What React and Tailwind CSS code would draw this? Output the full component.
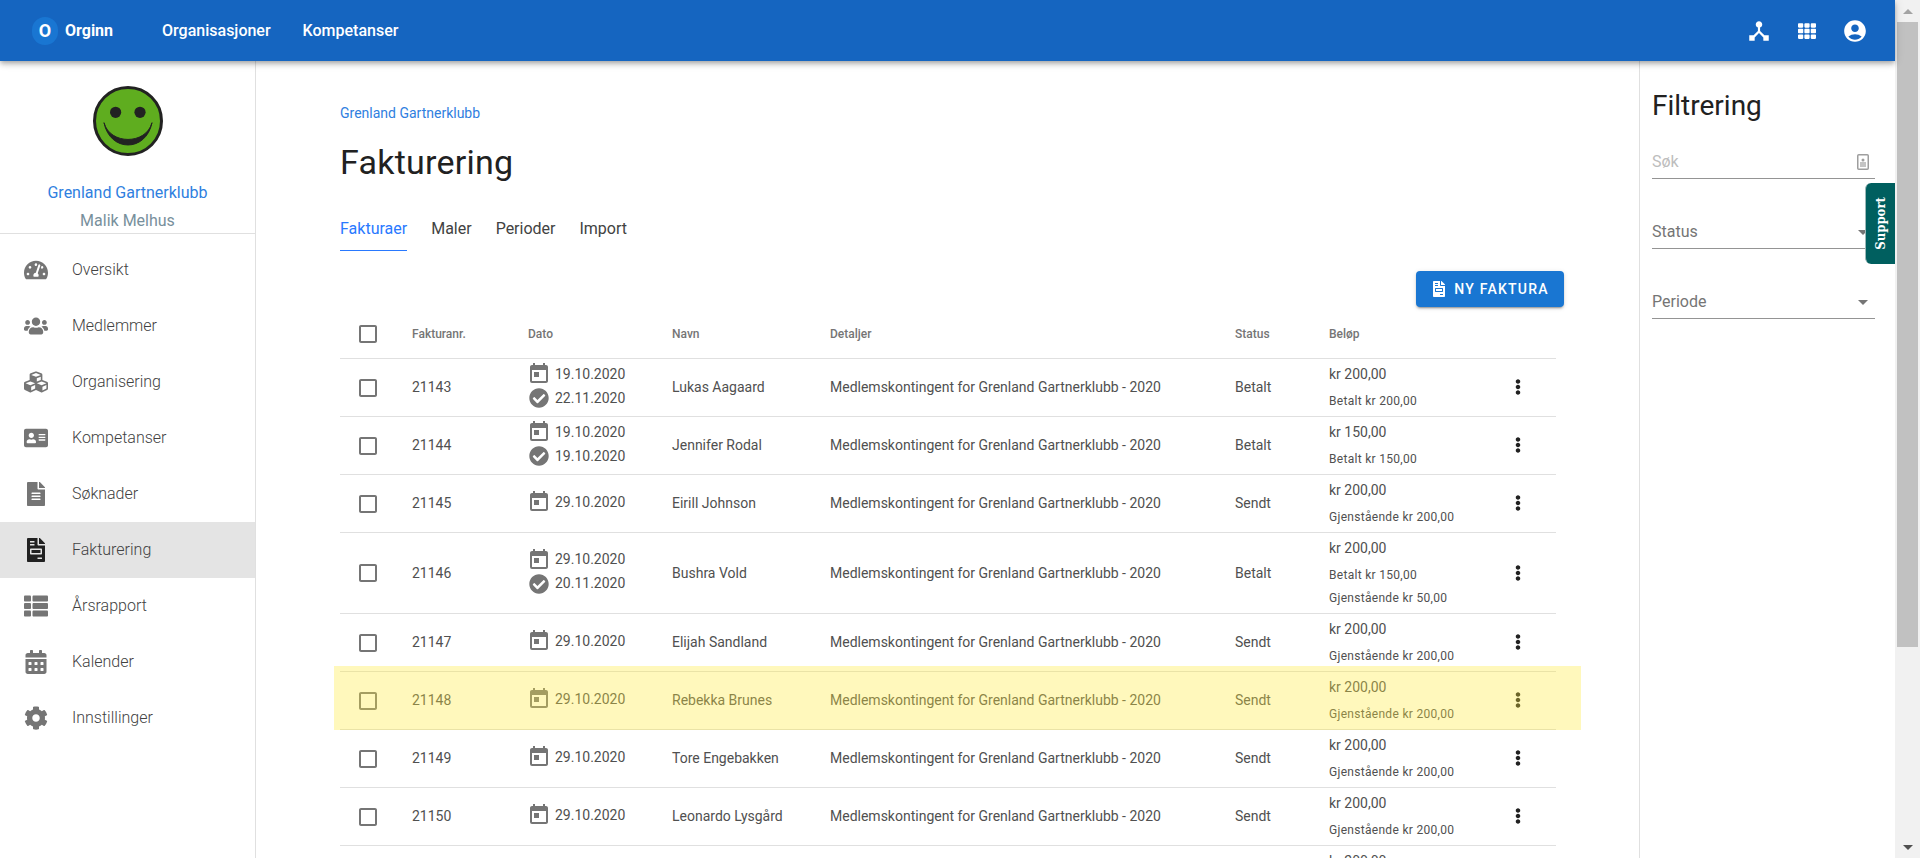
import React from 'react';
import {
  FaTachometerAlt, FaUsers, FaCubes, FaAddressCard, FaFileAlt, FaFileInvoice,
  FaThList, FaCalendarAlt, FaCog, FaCheckCircle, FaTh, FaEllipsisV,
} from 'react-icons/fa';
import {
  MdDeviceHub, MdAccountCircle, MdCheckBoxOutlineBlank, MdToday, MdArrowDropDown,
} from 'react-icons/md';

const NAV_ITEMS = [
  { label: 'Oversikt', icon: FaTachometerAlt },
  { label: 'Medlemmer', icon: FaUsers },
  { label: 'Organisering', icon: FaCubes },
  { label: 'Kompetanser', icon: FaAddressCard },
  { label: 'Søknader', icon: FaFileAlt },
  { label: 'Fakturering', icon: FaFileInvoice, active: true },
  { label: 'Årsrapport', icon: FaThList },
  { label: 'Kalender', icon: FaCalendarAlt },
  { label: 'Innstillinger', icon: FaCog },
];

const DETAILS = 'Medlemskontingent for Grenland Gartnerklubb - 2020';

const INVOICES = [
  { id: '21143', date: '19.10.2020', paidDate: '22.11.2020', name: 'Lukas Aagaard', status: 'Betalt', amount: 'kr 200,00', lines: ['Betalt kr 200,00'] },
  { id: '21144', date: '19.10.2020', paidDate: '19.10.2020', name: 'Jennifer Rodal', status: 'Betalt', amount: 'kr 150,00', lines: ['Betalt kr 150,00'] },
  { id: '21145', date: '29.10.2020', name: 'Eirill Johnson', status: 'Sendt', amount: 'kr 200,00', lines: ['Gjenstående kr 200,00'] },
  { id: '21146', date: '29.10.2020', paidDate: '20.11.2020', name: 'Bushra Vold', status: 'Betalt', amount: 'kr 200,00', lines: ['Betalt kr 150,00', 'Gjenstående kr 50,00'] },
  { id: '21147', date: '29.10.2020', name: 'Elijah Sandland', status: 'Sendt', amount: 'kr 200,00', lines: ['Gjenstående kr 200,00'] },
  { id: '21148', date: '29.10.2020', name: 'Rebekka Brunes', status: 'Sendt', amount: 'kr 200,00', lines: ['Gjenstående kr 200,00'], highlight: true },
  { id: '21149', date: '29.10.2020', name: 'Tore Engebakken', status: 'Sendt', amount: 'kr 200,00', lines: ['Gjenstående kr 200,00'] },
  { id: '21150', date: '29.10.2020', name: 'Leonardo Lysgård', status: 'Sendt', amount: 'kr 200,00', lines: ['Gjenstående kr 200,00'] },
];

const GRID = 'grid grid-cols-[72px_116px_144px_158px_405px_94px_171px_36px_1fr] items-center';

const Smiley = () => (
  <svg width="72" height="72" viewBox="0 0 72 72">
    <circle cx="36" cy="36" r="33.5" fill="#5fad1f" stroke="#222222" strokeWidth="3" />
    <circle cx="23.6" cy="27.3" r="5.6" fill="#222222" />
    <circle cx="48" cy="27.3" r="5.6" fill="#222222" />
    <path d="M12 37.7 C18 67.4 54 67.4 60 37.7 C54 60 18 60 12 37.7 Z" fill="#222222" stroke="#222222" strokeWidth="1" strokeLinejoin="round" />
  </svg>
);

// little badge shown inside the search field
const BadgeIcon = () => (
  <svg width="12" height="16" viewBox="0 0 12 16" className="mb-[8px] mr-[6px]">
    <rect x="0.75" y="0.75" width="10.5" height="14.5" rx="1" fill="none" stroke="#9e9e9e" strokeWidth="1.5" />
    <circle cx="6" cy="6" r="1.5" fill="#9e9e9e" />
    <rect x="3" y="8" width="6" height="5" fill="#c4c4c4" />
  </svg>
);

const Sidebar = () => (
  <aside className="w-[256px] flex-shrink-0 border-r border-[#e0e0e0]">
    <div className="h-[173px] border-b border-[#e0e0e0] flex flex-col items-center pt-[24px]">
      <Smiley />
      <div className="mt-[24px] text-[16px] leading-[24px] text-[#2f80e0]">Grenland Gartnerklubb</div>
      <div className="mt-[4px] text-[16px] leading-[24px] text-[#78909c]">Malik Melhus</div>
    </div>
    <nav className="pt-[8px]">
      {NAV_ITEMS.map(({ label, icon: Icon, active }) => (
        <div key={label} className={`h-[56px] flex items-center ${active ? 'bg-[#e4e4e4]' : ''}`}>
          <div className={`w-[72px] flex justify-center ${active ? 'text-[#212121]' : 'text-[#757575]'}`}>
            <Icon size={24} />
          </div>
          <span className="text-[16px] text-[#424242] font-light">{label}</span>
        </div>
      ))}
    </nav>
  </aside>
);

const InvoiceRow = ({ invoice }) => (
  <div className={`${GRID} relative border-b border-[#e0e0e0] text-[14px] text-[#505050] ${invoice.lines.length > 1 ? 'h-[81px]' : 'h-[58px]'}`}>
    <div className="pl-[16px] flex"><MdCheckBoxOutlineBlank size={24} className="text-[#757575]" /></div>
    <div>{invoice.id}</div>
    <div className="-ml-[1px] -mt-[3px]">
      <div className="flex items-center gap-[4px] h-[24px]">
        <MdToday size={24} className="text-[#757575] flex-shrink-0" />
        <span>{invoice.date}</span>
      </div>
      {invoice.paidDate && (
        <div className="flex items-center gap-[4px] h-[24px]">
          <div className="w-[24px] flex justify-center flex-shrink-0"><FaCheckCircle size={20} className="text-[#757575]" /></div>
          <span>{invoice.paidDate}</span>
        </div>
      )}
    </div>
    <div>{invoice.name}</div>
    <div>{DETAILS}</div>
    <div>{invoice.status}</div>
    <div className="self-start pt-[7px]">
      <div className="leading-[16px] mb-[8px]">{invoice.amount}</div>
      {invoice.lines.map((line) => (
        <div key={line} className="text-[12px] leading-[23px] tracking-[0.3px]">{line}</div>
      ))}
    </div>
    <div className="flex justify-center text-[#212121] -mt-[1px]"><FaEllipsisV size={16} /></div>
    {/* translucent yellow marker over the whole row */}
    {invoice.highlight && (
      <div className="absolute -left-[6px] -right-[25px] -top-[6px] -bottom-[1px] bg-[rgba(255,235,59,0.34)] pointer-events-none" />
    )}
  </div>
);

const Filter = ({ label, select, className = '' }) => (
  <div className={`h-[44px] border-b border-[#949494] flex items-end justify-between text-[16px] leading-[24px] ${className}`}>
    <span className={`pb-[4px] ${select ? 'text-[#757575]' : 'text-[#bdbdbd]'}`}>{label}</span>
    {select ? <MdArrowDropDown size={24} className="text-[#757575] mb-[4px]" /> : <BadgeIcon />}
  </div>
);

const Scrollbar = () => (
  <div className="w-[25px] flex-shrink-0 bg-[#f1f1f1] flex flex-col items-center">
    <div className="h-[22px] flex items-center justify-center">
      <div className="w-0 h-0 border-x-[5px] border-x-transparent border-b-[5px] border-b-[#a3a3a3]" />
    </div>
    <div className="w-[21px] h-[625px] bg-[#c1c1c1]" />
    <div className="flex-1" />
    <div className="h-[22px] flex items-center justify-center">
      <div className="w-0 h-0 border-x-[5px] border-x-transparent border-t-[5px] border-t-[#505050]" />
    </div>
  </div>
);

const App = () => (
  <div className="flex h-screen overflow-hidden bg-white font-['Roboto',sans-serif]">
    <div className="flex-1 min-w-0 flex flex-col relative">
      {/* Top bar */}
      <header className="h-[61px] flex-shrink-0 bg-[#1565c0] text-white flex items-center pl-[32px] pr-[16px] relative z-10 shadow-[0_2px_4px_-1px_rgba(0,0,0,0.2),0_4px_5px_0_rgba(0,0,0,0.14),0_1px_10px_0_rgba(0,0,0,0.12)]">
        <div className="w-[26px] h-[28px] rounded-full bg-[#1976d2] flex items-center justify-center font-bold text-[18px]">O</div>
        <span className="ml-[7px] text-[16px] font-bold">Orginn</span>
        <span className="ml-[49px] text-[16px] font-medium">Organisasjoner</span>
        <span className="ml-[32px] text-[16px] font-medium">Kompetanser</span>
        <div className="ml-auto flex items-center">
          <div className="w-[48px] flex justify-center"><MdDeviceHub size={26} /></div>
          <div className="w-[48px] flex justify-center"><FaTh size={18} /></div>
          <div className="w-[48px] flex justify-center"><MdAccountCircle size={26} /></div>
        </div>
      </header>

      <div className="flex flex-1 min-h-0">
        <Sidebar />

        {/* Main content */}
        <main className="flex-1 min-w-0 pl-[84px] pr-[83px] pt-[44px]">
          <div className="text-[14px] leading-[16px] text-[#2f80e0]">Grenland Gartnerklubb</div>
          <h1 className="mt-[21px] text-[34px] leading-[40px] tracking-[0.25px] text-[#212121]">Fakturering</h1>
          <div className="mt-[35px] flex gap-[24px] text-[16px] leading-[24px] text-[#424242]">
            <div className="pb-[9px] border-b border-[#2979ff] text-[#2979ff]">Fakturaer</div>
            <div>Maler</div>
            <div>Perioder</div>
            <div>Import</div>
          </div>
          <div className="mt-[20px] flex justify-end -mr-[8px]">
            <button className="w-[148px] h-[36px] rounded-[4px] bg-[#1976d2] text-white flex items-center justify-center gap-[7px] text-[14px] font-medium tracking-[1.25px] shadow-[0_3px_1px_-2px_rgba(0,0,0,0.2),0_2px_2px_0_rgba(0,0,0,0.14),0_1px_5px_0_rgba(0,0,0,0.12)]">
              <FaFileInvoice size={16} />
              NY FAKTURA
            </button>
          </div>
          <div className={`${GRID} h-[52px] pt-[2px] border-b border-[#e0e0e0] text-[12px] font-medium text-[#757575]`}>
            <div className="pl-[16px] flex"><MdCheckBoxOutlineBlank size={24} /></div>
            <div>Fakturanr.</div>
            <div>Dato</div>
            <div>Navn</div>
            <div>Detaljer</div>
            <div>Status</div>
            <div>Beløp</div>
          </div>
          {INVOICES.map((invoice) => (
            <InvoiceRow key={invoice.id} invoice={invoice} />
          ))}
          <div className={`${GRID} text-[14px] text-[#505050] pt-[7px]`}>
            <div className="col-start-7 leading-[16px]">kr 200,00</div>
          </div>
        </main>

        {/* Filter panel */}
        <aside className="w-[256px] flex-shrink-0 border-l border-[#e0e0e0] pl-[12px] pr-[20px] pt-[23px]">
          <h2 className="text-[28px] leading-[44px] text-[#212121]">Filtrering</h2>
          <Filter label="Søk" className="mt-[7px]" />
          <Filter label="Status" select className="mt-[26px]" />
          <Filter label="Periode" select className="mt-[26px]" />
        </aside>
      </div>

      {/* Support tab */}
      <div className="absolute right-0 top-[183px] w-[30px] h-[81px] bg-[#005f5f] rounded-l-[6px] border-l border-[#9db8b8] flex items-center justify-center z-20">
        <span className="[writing-mode:vertical-rl] rotate-180 text-white text-[13px] font-bold font-['DejaVu_Serif_Condensed','DejaVu_Serif',serif]">Support</span>
      </div>
    </div>
    <Scrollbar />
  </div>
);

export default App;
